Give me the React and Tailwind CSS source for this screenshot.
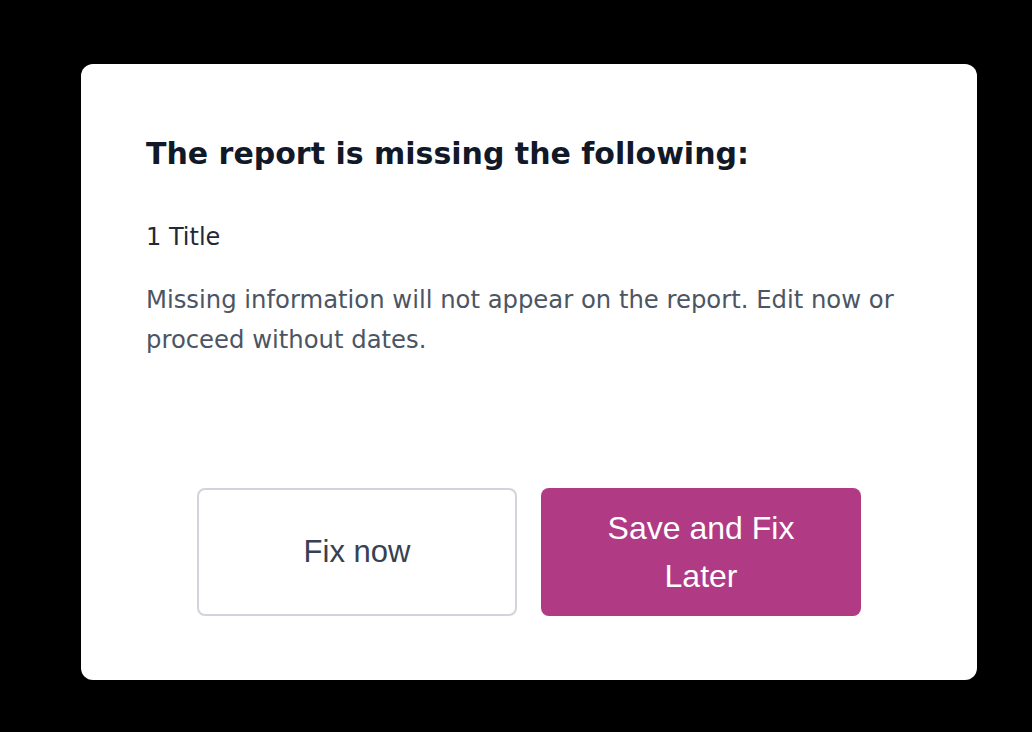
import React from "react";

const MissingInfoModal = () => {
    return (
        <div className="min-h-screen bg-black pt-16 pl-[81px] font-['DejaVu_Sans',sans-serif]">
            <div className="w-[896px] h-[616px] bg-white rounded-xl flex flex-col px-[65px] pt-[72px] pb-16">
                <h2 className="text-[30px] leading-9 font-bold text-[#111827]">
                    The report is missing the following:
                </h2>
                <p className="mt-[49px] text-2xl leading-8 text-[#1f2937]">1 Title</p>
                <p className="mt-[27px] text-[24.3px] leading-10 text-[#4b5563]">
                    Missing information will not appear on the report. Edit now or proceed without dates.
                </p>

                <div className="mt-auto flex justify-center gap-6 font-['Liberation_Sans',Arial,sans-serif]">
                    <button className="w-[320px] h-[128px] rounded-lg border-2 border-[#d1d5db] bg-white text-[31px] leading-12 text-[#374151]">
                        Fix now
                    </button>
                    <button className="w-[320px] h-[128px] rounded-lg bg-[#b03a84] px-8 text-[32px] leading-12 text-white">
                        Save and Fix Later
                    </button>
                </div>
            </div>
        </div>
    );
};

export default MissingInfoModal;
